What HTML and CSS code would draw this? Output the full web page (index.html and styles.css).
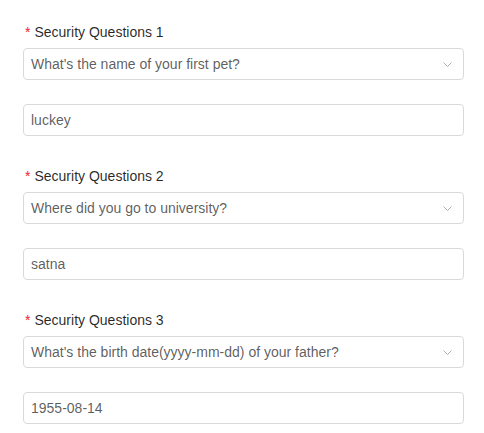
FILE: index.html
```html
<!DOCTYPE html>
<html>
<head>
<meta charset="utf-8">
<link rel="stylesheet" href="styles.css">
</head>
<body>
<div class="form">
  <div class="group">
    <div class="label"><span class="req">*</span>Security Questions 1</div>
    <div class="select"><span class="value">What's the name of your first pet?</span>
      <svg class="arrow" viewBox="0 0 9 5" width="9" height="5"><polyline points="0.5,0.5 4.5,4.5 8.5,0.5" fill="none" stroke="currentColor" stroke-width="1"/></svg>
    </div>
    <div class="input">luckey</div>
  </div>
  <div class="group">
    <div class="label"><span class="req">*</span>Security Questions 2</div>
    <div class="select"><span class="value">Where did you go to university?</span>
      <svg class="arrow" viewBox="0 0 9 5" width="9" height="5"><polyline points="0.5,0.5 4.5,4.5 8.5,0.5" fill="none" stroke="currentColor" stroke-width="1"/></svg>
    </div>
    <div class="input">satna</div>
  </div>
  <div class="group">
    <div class="label"><span class="req">*</span>Security Questions 3</div>
    <div class="select"><span class="value">What's the birth date(yyyy-mm-dd) of your father?</span>
      <svg class="arrow" viewBox="0 0 9 5" width="9" height="5"><polyline points="0.5,0.5 4.5,4.5 8.5,0.5" fill="none" stroke="currentColor" stroke-width="1"/></svg>
    </div>
    <div class="input">1955-08-14</div>
  </div>
</div>
</body>
</html>
```
FILE: styles.css
```css
html, body {
  margin: 0;
  padding: 0;
  background: #fff;
}
body {
  font-family: "Liberation Sans", Arial, sans-serif;
  font-size: 14px;
}
.form {
  padding: 16px 20px 0 23px;
  display: flex;
  flex-direction: column;
  gap: 24px;
}
.group {
  display: flex;
  flex-direction: column;
}
.label {
  height: 32px;
  line-height: 32px;
  color: rgba(0, 0, 0, 0.85);
  padding-left: 2px;
}
.req {
  color: #f5222d;
  margin-right: 4px;
}
.select, .input {
  box-sizing: border-box;
  height: 32px;
  border: 1px solid #d9d9d9;
  border-radius: 4px;
  padding: 0 7px 0 7px;
  display: flex;
  align-items: center;
  color: rgba(0, 0, 0, 0.65);
}
.select {
  justify-content: space-between;
  padding-right: 11px;
}
.input {
  margin-top: 24px;
}
.arrow {
  color: #b3b3b3;
  width: 9px;
  height: 5px;
}
```
